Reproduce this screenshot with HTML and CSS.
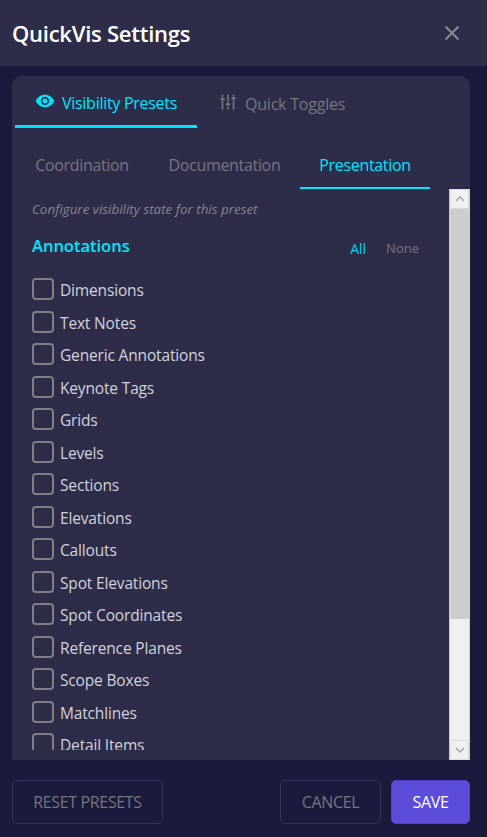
FILE: index.html
```html
<!DOCTYPE html>
<html lang="en">
<head>
<meta charset="utf-8">
<title>QuickVis Settings</title>
<link rel="stylesheet" href="styles.css">
</head>
<body>
<header class="header">
  <h1 class="title">QuickVis Settings</h1>
  <button class="close" aria-label="Close">
    <svg width="16" height="16" viewBox="0 0 16 16"><path d="M1.5 1.5l13 13M14.5 1.5l-13 13" stroke="currentColor" stroke-width="2" fill="none"/></svg>
  </button>
</header>
<main class="card">
  <nav class="tabs">
    <div class="tab tab-active">
      <svg class="tab-icon" width="20" height="20" viewBox="0 0 24 24"><path fill="currentColor" d="M12 4.5C7 4.5 2.73 7.61 1 12c1.73 4.39 6 7.5 11 7.5s9.27-3.11 11-7.5c-1.730-4.390-6-7.500-11-7.500zM12 17c-2.760 0-5-2.240-5-5s2.240-5 5-5 5 2.240 5 5-2.240 5-5 5zm0-8c-1.660 0-3 1.340-3 3s1.340 3 3 3 3-1.340 3-3-1.340-3-3-3z"/></svg>
      <span>Visibility Presets</span>
    </div>
    <div class="tab tab-plain">
      <svg class="tab-icon" width="16" height="16" viewBox="0 0 16 16"><path d="M2.500 0.500v3M2.500 7v8.500M8 0.500v8M8 12.500v3M13.500 0.500v2M13.500 6v9.500" stroke="currentColor" stroke-width="1.600" fill="none"/><path d="M0.500 4h4v2.500h-4zM6 9h4v2.500h-4zM11.500 3h4v2.500h-4z" fill="currentColor"/></svg>
      <span>Quick Toggles</span>
    </div>
  </nav>
  <nav class="subtabs">
    <div class="subtab sub-a">Coordination</div>
    <div class="subtab sub-b">Documentation</div>
    <div class="subtab sub-c subtab-active">Presentation</div>
  </nav>
  <div class="panel">
    <div class="scroll">
      <p class="hint">Configure visibility state for this preset</p>
      <div class="section-head">
        <h2 class="section-title">Annotations</h2>
        <div class="links"><span class="link-on">All</span><span class="link-off">None</span></div>
      </div>
      <ul class="list">
        <li class="row"><span class="box"></span>Dimensions</li>
        <li class="row"><span class="box"></span>Text Notes</li>
        <li class="row"><span class="box"></span>Generic Annotations</li>
        <li class="row"><span class="box"></span>Keynote Tags</li>
        <li class="row"><span class="box"></span>Grids</li>
        <li class="row"><span class="box"></span>Levels</li>
        <li class="row"><span class="box"></span>Sections</li>
        <li class="row"><span class="box"></span>Elevations</li>
        <li class="row"><span class="box"></span>Callouts</li>
        <li class="row"><span class="box"></span>Spot Elevations</li>
        <li class="row"><span class="box"></span>Spot Coordinates</li>
        <li class="row"><span class="box"></span>Reference Planes</li>
        <li class="row"><span class="box"></span>Scope Boxes</li>
        <li class="row"><span class="box"></span>Matchlines</li>
        <li class="row"><span class="box"></span>Detail Items</li>
      </ul>
    </div>
    <div class="scrollbar">
      <div class="sb-btn"><svg width="10" height="6" viewBox="0 0 10 6"><path d="M1 5l4-4 4 4" stroke="#a6a6a6" stroke-width="1.500" fill="none"/></svg></div>
      <div class="sb-thumb"></div>
      <div class="sb-track"></div>
      <div class="sb-btn"><svg width="10" height="6" viewBox="0 0 10 6"><path d="M1 1l4 4 4-4" stroke="#a6a6a6" stroke-width="1.500" fill="none"/></svg></div>
    </div>
  </div>
</main>
<footer class="footer">
  <button class="btn btn-reset">RESET PRESETS</button>
  <div class="footer-right">
    <button class="btn btn-cancel">CANCEL</button>
    <button class="btn btn-save">SAVE</button>
  </div>
</footer>
</body>
</html>
```
FILE: styles.css
```css
* { box-sizing: border-box; }
html, body { margin: 0; height: 100%; }
body {
  background: #1a1a3c;
  font-family: "Open Sans", "Noto Sans", sans-serif;
  display: flex;
  flex-direction: column;
  overflow: hidden;
  color: #fff;
}
.header {
  height: 66px;
  background: #2d2d4a;
  display: flex;
  align-items: center;
  justify-content: space-between;
  padding: 0 27px 0 12px;
  flex: none;
}
.title { margin: 0 0 1px; font-size: 22px; font-weight: 600; letter-spacing: -0.25px; }
.close { background: none; border: 0; padding: 0; color: #8a8a8f; display: flex; }
.card {
  margin: 10px 17px 0 12px;
  width: 458px;
  height: 684px;
  background: #2d2d4a;
  border-radius: 10px 10px 0 0;
  display: flex;
  flex-direction: column;
  flex: none;
}
.tabs { display: flex; height: 52px; padding-left: 3px; flex: none; }
.tab {
  display: flex;
  align-items: center;
  gap: 7px;
  font-size: 16px;
  color: #76767e;
  padding: 4px 0 0 20px;
  letter-spacing: -0.28px;
}
.tab-icon { margin-top: -4px; }
.tab-active {
  width: 182px;
  color: #00e5ff;
  border-bottom: 3px solid #00e5ff;
}
.tab-plain { padding-left: 23px; gap: 9px; letter-spacing: -0.22px; }
.subtabs { display: flex; height: 61px; padding: 0 0 0 3px; flex: none; }
.subtab {
  display: flex;
  align-items: center;
  justify-content: center;
  font-size: 16px;
  color: #76767e;
  letter-spacing: -0.33px;
  padding-top: 14px;
  height: 100%;
  border-bottom: 2px solid transparent;
}
.sub-a { width: 134px; }
.sub-b { width: 151px; }
.sub-c { width: 130px; }
.subtab-active { color: #00e5ff; border-bottom-color: #00e5ff; }
.panel { flex: 1; min-height: 0; display: flex; }
.scroll { flex: 1; min-width: 0; height: 561px; overflow: hidden; padding-left: 20px; }
.hint { margin: 0; padding-top: 12px; height: 34px; font-size: 13.4px; line-height: 16px; font-style: italic; color: #85858c; }
.section-head { display: flex; align-items: center; justify-content: space-between; height: 44px; padding-right: 30px; }
.section-title { margin: 0; font-size: 16.6px; font-weight: 600; color: #00e5ff; letter-spacing: -0.06px; }
.links { display: flex; gap: 20px; font-size: 13px; padding-top: 6px; }
.link-on { color: #00d4ee; font-size: 14px; }
.link-off { color: #76767e; }
.list { list-style: none; margin: 7px 0 0; padding: 0; }
.row {
  display: flex;
  align-items: center;
  gap: 6px;
  height: 32.5px;
  font-size: 15.5px;
  color: #d2d2dc;
  letter-spacing: -0.16px;
}
.box { width: 22px; height: 22px; border: 2.4px solid #7f7f85; border-radius: 4px; flex: none; margin-top: -2px; }
.scrollbar { width: 21px; height: 571px; margin-right: 0; background: #f0f0f0; display: flex; flex-direction: column; flex: none; border: 1px solid #cdcdcd; border-width: 0 1px 0 1px; }
.sb-btn { height: 20px; flex: none; background: #f0f0f0; border: 1px solid #dcdcdc; display: flex; align-items: center; justify-content: center; }
.sb-thumb { height: 410px; background: #cdcdcd; flex: none; margin: 0 -1px; }
.sb-track { flex: 1; }
.footer { display: flex; justify-content: space-between; padding: 20px 17px 0 12px; flex: none; }
.footer-right { display: flex; gap: 10px; }
.btn {
  height: 44px;
  border-radius: 5px;
  font-family: inherit;
  font-size: 16px;
  letter-spacing: -0.35px;
  background: transparent;
  border: 1px solid #33335a;
  color: #76767e;
  padding: 0;
}
.btn-reset { width: 151px; }
.btn-cancel { width: 101px; }
.btn-save { width: 79px; background: #5b4dd9; border-color: #5144c4; color: #fff; }
```
